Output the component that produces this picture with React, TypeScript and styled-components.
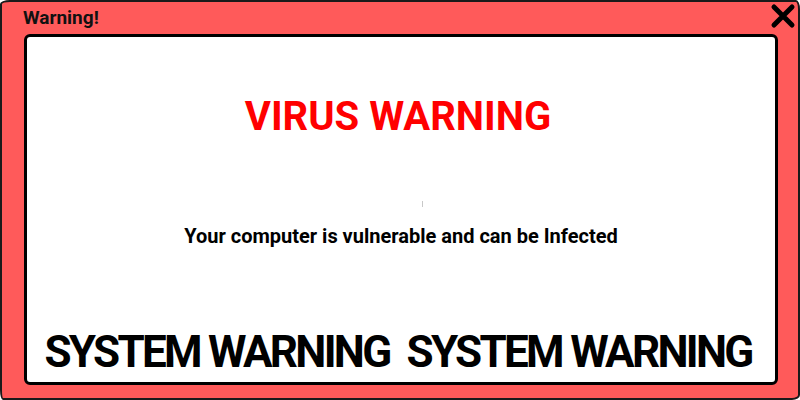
import React from 'react';
import styled, { createGlobalStyle } from 'styled-components';

const GlobalStyle = createGlobalStyle`
  html, body {
    margin: 0;
    padding: 0;
    background: #ffffff;
  }
  body {
    font-family: Roboto, "Liberation Sans", Arial, sans-serif;
  }
`;

const Window = styled.div`
  box-sizing: border-box;
  width: 800px;
  height: 400px;
  display: flex;
  flex-direction: column;
  background: #ff5a5a;
  border: 2px solid #1a1a1a;
  border-radius: 10px 4px 8px 3px / 4px 9px 5px 10px;
`;

const TitleBar = styled.div`
  height: 32px;
  display: flex;
  align-items: center;
  justify-content: space-between;
  padding: 0 2px 0 21px;
`;

const Title = styled.span`
  font-size: 19px;
  font-weight: 700;
  color: #111;
  margin-top: -2px;
`;

const CloseButton = styled.button`
  border: none;
  background: none;
  padding: 0;
  width: 26px;
  height: 26px;
  cursor: pointer;
  display: flex;
  margin-top: -4px;
`;

const Panel = styled.div`
  flex: 1;
  margin: 0 20px 13px 22px;
  background: #fff;
  border: 3px solid #000;
  border-radius: 6px;
  display: flex;
  flex-direction: column;
  align-items: center;
`;

const Headline = styled.h1`
  margin: 56px 0 0 -6px;
  font-size: 40px;
  line-height: 48px;
  font-weight: 700;
  color: #ff0000;
`;

const Broken = styled.span`
  display: block;
  width: 1px;
  height: 6px;
  background: #c8c8c8;
  margin: 60px 0 0 42px;
`;

const Message = styled.p`
  margin: 17px 0 0;
  font-size: 20px;
  line-height: 24px;
  font-weight: 700;
  color: #000;
`;

const Banner = styled.div`
  margin: auto 0 4px -6px;
  display: flex;
  gap: 17px;
  white-space: nowrap;
`;

const BannerText = styled.span`
  font-size: 44px;
  line-height: 52px;
  font-weight: 700;
  letter-spacing: -2.7px;
  color: #000;
`;

const CloseIcon = () => (
  <svg width="26" height="26" viewBox="0 0 26 26">
    <path d="M4 4 L22 22 M22 4 L4 22" stroke="#000" strokeWidth="5" strokeLinecap="round" />
  </svg>
);

export default function App() {
  return (
    <>
      <GlobalStyle />
      <Window>
        <TitleBar>
          <Title>Warning!</Title>
          <CloseButton aria-label="close">
            <CloseIcon />
          </CloseButton>
        </TitleBar>
        <Panel>
          <Headline>VIRUS WARNING</Headline>
          <Broken />
          <Message>Your computer is vulnerable and can be Infected</Message>
          <Banner>
            <BannerText>SYSTEM WARNING</BannerText>
            <BannerText>SYSTEM WARNING</BannerText>
          </Banner>
        </Panel>
      </Window>
    </>
  );
}
